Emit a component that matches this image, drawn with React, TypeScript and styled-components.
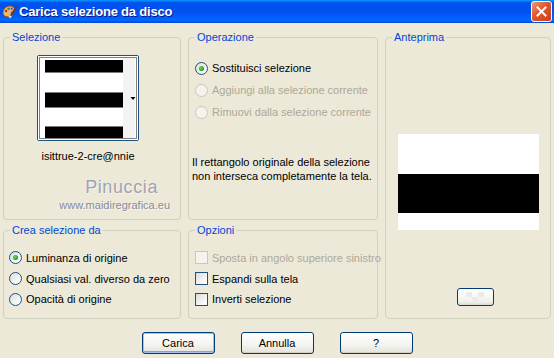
import styled, { createGlobalStyle } from 'styled-components'

const GlobalStyle = createGlobalStyle`
  html, body {
    margin: 0;
    padding: 0;
    background: #ece9d8;
  }
  body {
    font-family: "Liberation Sans", Arial, sans-serif;
    font-size: 11px;
    color: #000;
  }
`

const Window = styled.div`
  width: 554px;
  height: 358px;
  background: #ece9d8;
  overflow: hidden;
  display: flex;
  flex-direction: column;
`

const TitleBar = styled.div`
  height: 23px;
  flex: none;
  display: flex;
  align-items: center;
  padding: 0 2px 0 1px;
  background: linear-gradient(
    to bottom,
    #0997ff 0%,
    #0053ee 12%,
    #0050ee 50%,
    #0066ff 88%,
    #0049d4 100%
  );
`

const Title = styled.div`
  flex: 1;
  margin-left: 2px;
  color: #fff;
  font-family: "Liberation Sans", Arial, sans-serif;
  font-weight: bold;
  font-size: 13px;
  letter-spacing: -0.2px;
  text-shadow: 1px 1px 0 #0a1883;
`

const CloseButton = styled.div`
  width: 19px;
  height: 19px;
  border: 1px solid #fff;
  border-radius: 3px;
  background: linear-gradient(135deg, #e99a7c 0%, #e0562d 45%, #c8401b 100%);
  display: flex;
  align-items: center;
  justify-content: center;
`

const Body = styled.div`
  display: grid;
  grid-template-columns: 178px 190px 166px;
  grid-template-rows: 189px 95px;
  column-gap: 7px;
  row-gap: 4px;
  padding: 8px 0 0 3px;
`

const Group = styled.fieldset<{ $tall?: boolean }>`
  margin: 0;
  padding: 0;
  min-width: 0;
  box-sizing: border-box;
  border: 1px solid #d0d0bf;
  border-radius: 4px;
  display: flex;
  flex-direction: column;
  ${p => (p.$tall ? 'grid-column: 3; grid-row: 1 / span 2;' : '')}
`

const Legend = styled.legend`
  margin-left: 6px;
  padding: 0 2px;
  color: #0046d5;
  font-size: 11px;
  line-height: 13px;
`

const SelectionBody = styled.div`
  display: flex;
  flex-direction: column;
  align-items: center;
  padding-right: 8px;
`

const Thumb = styled.div`
  margin-top: 11px;
  width: 100px;
  height: 84px;
  border: 1px solid #1c5180;
  border-radius: 2px;
  background: #fff;
  display: flex;
`

const FileName = styled.div`
  margin-top: 8px;
  line-height: 14px;
`

const Watermark = styled.div`
  align-self: stretch;
  margin-top: 14px;
  margin-right: 2px;
  text-align: right;
`

const Signature = styled.div`
  margin-right: 12px;
  font-size: 18px;
  line-height: 20px;
  letter-spacing: 0.6px;
  color: #a2a2b4;
  text-shadow: 1px 1px 0 #f6f5ef;
`

const Site = styled.div`
  margin-top: 2px;
  font-size: 11px;
  line-height: 12px;
  color: #8b8b9b;
  text-shadow: 1px 1px 0 #f6f5ef;
`

const OptionList = styled.div<{ $top: number; $left: number }>`
  display: flex;
  flex-direction: column;
  margin-top: ${p => p.$top}px;
  padding-left: ${p => p.$left}px;
`

const OptionRow = styled.div<{ $h: number; $disabled?: boolean }>`
  height: ${p => p.$h}px;
  display: flex;
  align-items: center;
  gap: 4px;
  white-space: nowrap;
  color: ${p => (p.$disabled ? '#aca899' : '#000')};
`

const Radio = styled.span<{ $checked?: boolean; $disabled?: boolean }>`
  width: 11px;
  height: 11px;
  flex: none;
  border-radius: 50%;
  border: 1px solid ${p => (p.$disabled ? '#cac8bb' : '#1c5180')};
  background: ${p =>
    p.$disabled ? '#f4f3ee' : 'linear-gradient(135deg, #dcdcd7 0%, #ffffff 90%)'};
  display: flex;
  align-items: center;
  justify-content: center;
  &::after {
    content: '';
    display: ${p => (p.$checked ? 'block' : 'none')};
    width: 5px;
    height: 5px;
    border-radius: 50%;
    background: radial-gradient(circle at 40% 40%, #5ee85e 0%, #21a121 60%, #1a8a1a 100%);
  }
`

const Check = styled.span<{ $disabled?: boolean }>`
  width: 11px;
  height: 11px;
  flex: none;
  border: 1px solid ${p => (p.$disabled ? '#cac8bb' : '#1c5180')};
  background: ${p =>
    p.$disabled ? '#f4f3ee' : 'linear-gradient(135deg, #dcdcd7 0%, #ffffff 90%)'};
`

const Message = styled.div`
  margin-top: 32px;
  padding-left: 3px;
  line-height: 14px;
`

const PreviewBody = styled.div`
  display: flex;
  flex-direction: column;
  align-items: center;
`

const Preview = styled.div`
  margin-top: 90px;
  width: 141px;
  height: 96px;
  display: flex;
`

const SmallButton = styled.div`
  margin-top: 58px;
  margin-left: 14px;
  width: 35px;
  height: 16px;
  border: 1px solid #003c74;
  border-radius: 3px;
  background: linear-gradient(to bottom, #ffffff 0%, #f0f0ea 80%, #dcdbd3 100%);
  display: flex;
  align-items: center;
  justify-content: center;
`

const ButtonBar = styled.div`
  margin-top: 13px;
  display: flex;
  justify-content: center;
  gap: 26px;
`

const Button = styled.div<{ $default?: boolean }>`
  width: 71px;
  height: 20px;
  border: 1px solid #003c74;
  border-radius: 3px;
  background: linear-gradient(to bottom, #ffffff 0%, #f3f3ef 60%, #e3e2da 100%);
  box-shadow: ${p =>
    p.$default ? 'inset 0 0 0 1px #a8c2f0, inset 0 -1px 0 1px #7ea3e8' : 'inset 0 -1px 0 #d6d0c5'};
  display: flex;
  align-items: center;
  justify-content: center;
  font-size: 11px;
`

function AppIcon() {
  return (
    <svg width="16" height="16" viewBox="0 0 16 16">
      <path d="M2 9c0-4 3-7 7-7 3 0 5 2 5 4 0 2-2 2-3 2-1 0-1 1 0 2 1 1 0 3-2 3-4 0-7-1-7-4z" fill="#e8b27a" stroke="#8a4b1c" strokeWidth="0.8" />
      <circle cx="5" cy="7" r="1.2" fill="#d82020" />
      <circle cx="7.5" cy="4.8" r="1.2" fill="#1a9a2a" />
      <circle cx="10.6" cy="4.6" r="1.1" fill="#2050d8" />
      <circle cx="5.2" cy="10.5" r="1.1" fill="#f0d020" />
      <path d="M9 13l6-10" stroke="#6a3a12" strokeWidth="1.6" strokeLinecap="round" />
      <path d="M8.6 13.8l1.2-2" stroke="#e8e8e8" strokeWidth="2" />
    </svg>
  )
}

function ThumbImage() {
  return (
    <svg width="100" height="84" viewBox="0 0 100 84">
      <rect x="0" y="0" width="100" height="84" fill="#fff" />
      <rect x="85" y="2" width="12" height="80" fill="#f3f3f3" />
      <rect x="7" y="4" width="78" height="13" fill="#000" />
      <line x1="7" x2="85" y1="16.5" y2="16.5" stroke="#7a7a7a" />
      <rect x="7" y="36" width="78" height="16" fill="#000" />
      <line x1="7" x2="85" y1="36.5" y2="36.5" stroke="#7a7a7a" />
      <line x1="7" x2="85" y1="51.5" y2="51.5" stroke="#7a7a7a" />
      <rect x="7" y="70" width="78" height="12" fill="#000" />
      <line x1="7" x2="85" y1="70.5" y2="70.5" stroke="#7a7a7a" />
      <rect x="1.5" y="1.5" width="97" height="81" fill="none" stroke="#000" strokeDasharray="1 1" />
      <polygon points="92.5,41 97.5,41 95,44" fill="#000" />
    </svg>
  )
}

function PreviewImage() {
  return (
    <svg width="141" height="96" viewBox="0 0 141 96">
      <rect width="141" height="96" fill="#fff" />
      <rect y="40" width="141" height="39" fill="#000" />
    </svg>
  )
}

function CheckerGlyph() {
  return (
    <svg width="18" height="10" viewBox="0 0 18 10">
      <rect x="0" y="0" width="6" height="5" fill="#ebebeb" />
      <rect x="12" y="0" width="6" height="5" fill="#ebebeb" />
      <rect x="6" y="5" width="6" height="5" fill="#ebebeb" />
    </svg>
  )
}

export default function App() {
  return (
    <>
      <GlobalStyle />
      <Window>
        <TitleBar>
          <AppIcon />
          <Title>Carica selezione da disco</Title>
          <CloseButton>
            <svg width="11" height="11" viewBox="0 0 11 11">
              <path d="M1.5 1.5l8 8M9.5 1.5l-8 8" stroke="#fff" strokeWidth="2" strokeLinecap="square" />
            </svg>
          </CloseButton>
        </TitleBar>
        <Body>
          <Group>
            <Legend>Selezione</Legend>
            <SelectionBody>
              <Thumb>
                <ThumbImage />
              </Thumb>
              <FileName>isittrue-2-cre@nnie</FileName>
              <Watermark>
                <Signature>Pinuccia</Signature>
                <Site>www.maidiregrafica.eu</Site>
              </Watermark>
            </SelectionBody>
          </Group>
          <Group>
            <Legend>Operazione</Legend>
            <OptionList $top={13} $left={6}>
              <OptionRow $h={22}>
                <Radio $checked />
                Sostituisci selezione
              </OptionRow>
              <OptionRow $h={22} $disabled>
                <Radio $disabled />
                Aggiungi alla selezione corrente
              </OptionRow>
              <OptionRow $h={22} $disabled>
                <Radio $disabled />
                Rimuovi dalla selezione corrente
              </OptionRow>
            </OptionList>
            <Message>
              Il rettangolo originale della selezione
              <br />
              non interseca completamente la tela.
            </Message>
          </Group>
          <Group $tall>
            <Legend>Anteprima</Legend>
            <PreviewBody>
              <Preview>
                <PreviewImage />
              </Preview>
              <SmallButton>
                <CheckerGlyph />
              </SmallButton>
            </PreviewBody>
          </Group>
          <Group>
            <Legend>Crea selezione da</Legend>
            <OptionList $top={10} $left={5}>
              <OptionRow $h={21}>
                <Radio $checked />
                Luminanza di origine
              </OptionRow>
              <OptionRow $h={21}>
                <Radio />
                Qualsiasi val. diverso da zero
              </OptionRow>
              <OptionRow $h={20}>
                <Radio />
                Opacità di origine
              </OptionRow>
            </OptionList>
          </Group>
          <Group>
            <Legend>Opzioni</Legend>
            <OptionList $top={10} $left={6}>
              <OptionRow $h={21} $disabled>
                <Check $disabled />
                Sposta in angolo superiore sinistro
              </OptionRow>
              <OptionRow $h={21}>
                <Check />
                Espandi sulla tela
              </OptionRow>
              <OptionRow $h={20}>
                <Check />
                Inverti selezione
              </OptionRow>
            </OptionList>
          </Group>
        </Body>
        <ButtonBar>
          <Button $default>Carica</Button>
          <Button>Annulla</Button>
          <Button>?</Button>
        </ButtonBar>
      </Window>
    </>
  )
}
